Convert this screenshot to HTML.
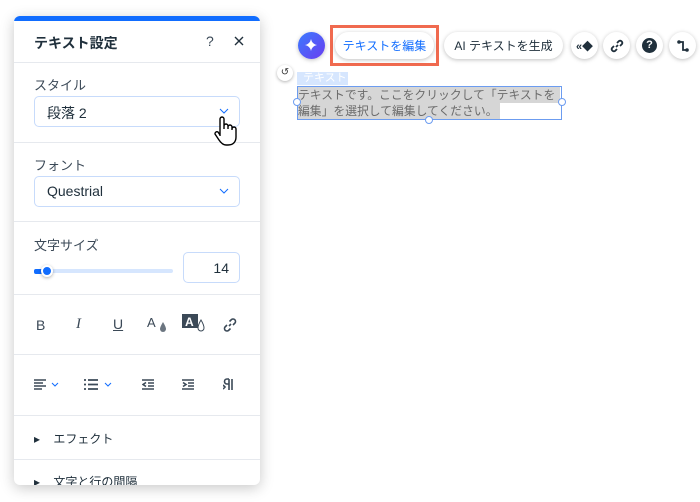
<!DOCTYPE html>
<html><head><meta charset="utf-8"><style>
*{box-sizing:border-box;margin:0;padding:0}
body{width:700px;height:502px;background:#fff;font-family:"Liberation Sans","Noto Sans CJK JP",sans-serif;position:relative;overflow:hidden;color:#20303c}
.abs{position:absolute}
.panel{left:14px;top:16px;width:246px;height:469px;background:#fff;border-radius:6px;box-shadow:0 3px 14px rgba(0,0,0,.22);overflow:hidden}
.panel .bar{left:0;top:0;width:100%;height:5px;background:#116dff}
.hr{left:0;width:100%;height:1px;background:#e6e9ee}
.lbl{font-size:13px;color:#3b4957;left:20px}
.sel{left:20px;width:206px;height:31px;border:1px solid #c7dbfb;border-radius:5px;font-size:14px;color:#20303c;padding:6px 12px;background:#fff}
.chev{position:absolute;right:10px;top:11px}
.btn{background:#fff;border-radius:16px;box-shadow:0 1px 4px rgba(0,0,0,.25);font-size:12px;display:flex;align-items:center;justify-content:center}
.cb{width:27px;height:27px;border-radius:50%;background:#fff;box-shadow:0 1px 4px rgba(0,0,0,.25);display:flex;align-items:center;justify-content:center}
</style></head><body>
<div class="abs panel">
 <div class="abs bar"></div>
 <div class="abs" style="left:20px;top:17px;font-size:14px;font-weight:bold;color:#20303c">テキスト設定</div>
 <div class="abs" style="left:192px;top:17px;font-size:14px;color:#3b4957">?</div>
 <svg class="abs" style="left:220px;top:20px" width="10" height="10"><path d="M1 1l8 8M9 1L1 9" stroke="#20303c" stroke-width="1.4"/></svg>
 <div class="abs hr" style="top:46px"></div>
 <div class="abs lbl" style="top:59px">スタイル</div>
 <div class="abs sel" style="top:80px">段落 2<svg class="chev" width="10" height="6"><path d="M1 1l4 4 4-4" stroke="#116dff" fill="none"/></svg></div>
 <div class="abs hr" style="top:126px"></div>
 <div class="abs lbl" style="top:139px">フォント</div>
 <div class="abs sel" style="top:160px">Questrial<svg class="chev" width="10" height="6"><path d="M1 1l4 4 4-4" stroke="#116dff" fill="none"/></svg></div>
 <div class="abs hr" style="top:205px"></div>
 <div class="abs lbl" style="top:219px">文字サイズ</div>
 <div class="abs" style="left:20px;top:253px;width:139px;height:4px;border-radius:2px;background:#d6e6fe"></div>
 <div class="abs" style="left:20px;top:253px;width:12px;height:5px;border-radius:2px;background:#116dff"></div>
 <div class="abs" style="left:27px;top:249px;width:12px;height:12px;border-radius:50%;background:#116dff;border:2px solid #fff;box-shadow:0 1px 3px rgba(0,0,0,.3)"></div>
 <div class="abs" style="left:169px;top:236px;width:57px;height:31px;border:1px solid #c7dbfb;border-radius:5px;font-size:14px;text-align:right;padding:7px 10px">14</div>
 <div class="abs hr" style="top:278px"></div>
 <div class="abs" style="top:301px;left:22px;font-size:14px;color:#3b4957">B</div>
 <div class="abs" style="top:300px;left:62px;font-size:15px;font-style:italic;color:#3b4957;font-family:'Liberation Serif',serif">I</div>
 <div class="abs" style="top:300px;left:99px;font-size:14px;text-decoration:underline;color:#3b4957">U</div>
 <svg class="abs" style="left:133px;top:300px" width="22" height="16"><text x="0" y="11" font-size="13" fill="#3b4957" font-family="Liberation Sans">A</text><path d="M16 6q-3 5-3 7a3 3 0 006 0q0-2-3-7z" fill="#6b7580"/></svg>
 <svg class="abs" style="left:167px;top:297px" width="26" height="20"><rect x="1" y="1" width="16" height="14" fill="#3b4957"/><text x="4" y="13" font-size="12" font-weight="bold" fill="#fff" font-family="Liberation Sans">A</text><path d="M20 7q-3 5-3 8a3 3 0 006 0q0-3-3-8z" fill="#fff" stroke="#3b4957"/></svg>
 <svg class="abs" style="left:208px;top:301px" width="16" height="16"><path d="M7 9l2-2M5 8l-2 2a2.5 2.5 0 003.5 3.5l2-2M11 8l2-2a2.5 2.5 0 00-3.5-3.5l-2 2" stroke="#3b4957" stroke-width="1.6" fill="none"/></svg>
 <div class="abs hr" style="top:338px"></div>
 <svg class="abs" style="left:20px;top:363px" width="32" height="12"><path d="M0 1h12M0 4h9M0 7h12M0 10h8" stroke="#3b4957" stroke-width="1.6"/><path d="M18 4l3 3 3-3" stroke="#116dff" fill="none"/></svg>
 <svg class="abs" style="left:70px;top:363px" width="32" height="12"><path d="M0 1h2M4 1h10M0 5.5h2M4 5.5h10M0 10h2M4 10h10" stroke="#3b4957" stroke-width="1.8"/><path d="M21 4l3 3 3-3" stroke="#116dff" fill="none"/></svg>
 <svg class="abs" style="left:128px;top:363px" width="12" height="12"><path d="M0 1h12M6 4h6M6 7h6M0 10h12M4 3.5L1 5.5 4 7.5" stroke="#3b4957" stroke-width="1.6" fill="none"/></svg>
 <svg class="abs" style="left:168px;top:363px" width="12" height="12"><path d="M0 1h12M6 4h6M6 7h6M0 10h12M1 3.5L4 5.5 1 7.5" stroke="#3b4957" stroke-width="1.6" fill="none"/></svg>
 <svg class="abs" style="left:209px;top:362px" width="12" height="12"><path d="M6 1v11M9 1v11M6 1H4a2.5 2.5 0 000 5h2M0 7l2 2-2 2" stroke="#3b4957" stroke-width="1.6" fill="none"/></svg>
 <div class="abs hr" style="top:399px"></div>
 <div class="abs" style="left:20px;top:414px;font-size:12px;color:#20303c">▸&nbsp;&nbsp;&nbsp;&nbsp;エフェクト</div>
 <div class="abs hr" style="top:443px"></div>
 <div class="abs" style="left:20px;top:457px;font-size:12px;color:#20303c">▸&nbsp;&nbsp;&nbsp;&nbsp;文字と行の間隔</div>
</div>
<svg class="abs" style="left:211px;top:114px" width="30" height="36"><path d="M9 22V5a2 2 0 014 0v10v-3a2 2 0 014 0v3-2a2 2 0 014 0v3-1a2 2 0 014 0v8c0 5-3 8-8 8h-2c-3 0-5-2-7-5l-4-6a2 2 0 013-2l2 3z" fill="#fff" stroke="#000" stroke-width="1.4"/></svg>
<div class="abs" style="left:298px;top:32px;width:27px;height:27px;border-radius:50%;background:linear-gradient(135deg,#3b7bff,#6a3df0);box-shadow:0 1px 4px rgba(0,0,0,.25)"><svg width="27" height="27"><path d="M13 7q1 5 6 6q-5 1-6 6q-1-5-6-6q5-1 6-6z" fill="#fff"/></svg></div>
<div class="abs" style="left:330px;top:25px;width:109px;height:41px;border:3px solid #f06a4f"></div>
<div class="abs btn" style="left:335px;top:32px;width:99px;height:27px;color:#116dff">テキストを編集</div>
<div class="abs btn" style="left:444px;top:32px;width:119px;height:27px;color:#20303c">AI テキストを生成</div>
<div class="abs cb" style="left:571px;top:32px;font-size:11px;color:#20303c"><b>«◆</b></div>
<div class="abs cb" style="left:603px;top:32px"><svg width="14" height="14"><path d="M6 8l2-2M4 7l-2 2a2.2 2.2 0 003 3l2-2M10 7l2-2a2.2 2.2 0 00-3-3l-2 2" stroke="#20303c" stroke-width="1.8" fill="none"/></svg></div>
<div class="abs cb" style="left:636px;top:32px"><div style="width:15px;height:15px;border-radius:50%;background:#20303c;color:#fff;font-size:11px;font-weight:bold;text-align:center;line-height:15px">?</div></div>
<div class="abs cb" style="left:669px;top:32px"><svg width="14" height="14"><path d="M3 3h4v8h4" stroke="#20303c" stroke-width="1.8" fill="none"/><circle cx="3" cy="3" r="1.8" fill="#20303c"/><circle cx="11" cy="11" r="1.8" fill="#20303c"/></svg></div>
<div class="abs" style="left:277px;top:65px;width:16px;height:16px;border-radius:50%;background:#fff;box-shadow:0 1px 3px rgba(0,0,0,.3);font-size:10px;text-align:center;line-height:16px;color:#333">↺</div>
<div class="abs" style="left:297px;top:72px;width:51px;height:13px;background:#d6e6fe;color:#fff;font-size:11px;padding-left:6px;line-height:13px">テキスト</div>
<div class="abs" style="left:297px;top:86px;width:265px;height:34px;border:1px solid #6c9cf0"></div>
<div class="abs" style="left:298px;top:87px;width:262px;height:16px;background:#d6d6d6"></div>
<div class="abs" style="left:298px;top:103px;width:202px;height:16px;background:#d6d6d6"></div>
<div class="abs" style="left:298px;top:87px;font-size:11.8px;line-height:16px;color:#6b6b6b;white-space:nowrap">テキストです。ここをクリックして「テキストを<br>編集」を選択して編集してください。</div>
<div class="abs" style="left:293px;top:98px;width:8px;height:8px;border-radius:50%;background:#fff;border:1px solid #6c9cf0"></div>
<div class="abs" style="left:558px;top:98px;width:8px;height:8px;border-radius:50%;background:#fff;border:1px solid #6c9cf0"></div>
<div class="abs" style="left:425px;top:116px;width:8px;height:8px;border-radius:50%;background:#fff;border:1px solid #6c9cf0"></div>
</body></html>
